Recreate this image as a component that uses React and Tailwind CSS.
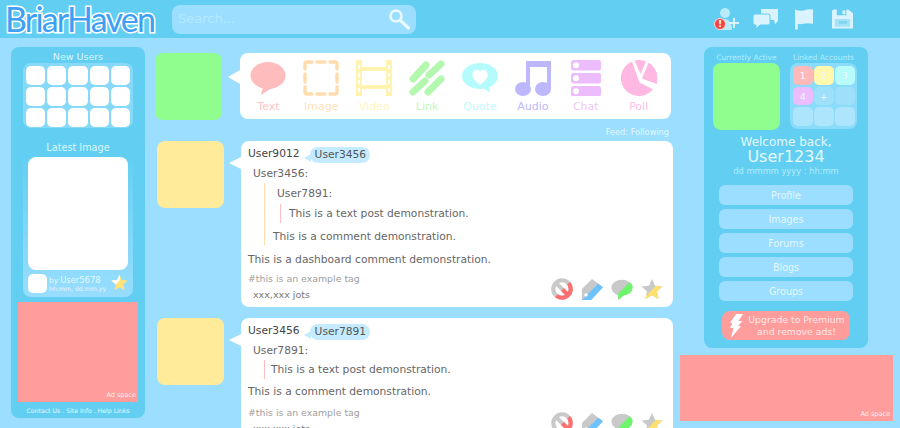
import React from "react";

const newUsers = Array.from({ length: 15 });

const composerItems = [
  { label: "Text", color: "text-[#ffc4c4]", icon: <TextIcon /> },
  { label: "Image", color: "text-[#ffe2bd]", icon: <ImageIcon /> },
  { label: "Video", color: "text-[#fff5bd]", icon: <VideoIcon /> },
  { label: "Link", color: "text-[#c0f9bb]", icon: <LinkIcon /> },
  { label: "Quote", color: "text-[#c0fbfb]", icon: <QuoteIcon /> },
  { label: "Audio", color: "text-[#bdb8fb]", icon: <AudioIcon /> },
  { label: "Chat", color: "text-[#efc8fd]", icon: <ChatIcon /> },
  { label: "Poll", color: "text-[#ffc0e6]", icon: <PollIcon /> },
];

const menuItems = ["Profile", "Images", "Forums", "Blogs", "Groups"];

function TextIcon() {
  return (
    <svg viewBox="0 0 36 36" className="w-9 h-9" fill="#ffbcbc">
      <ellipse cx="18" cy="15.5" rx="17.5" ry="13.5" />
      <path d="M13 27 L11 35 L22 28 Z" />
    </svg>
  );
}

function ImageIcon() {
  return (
    <svg viewBox="0 0 36 36" className="w-9 h-9" fill="none" stroke="#ffdcae" strokeWidth="3.4" strokeLinecap="round">
      <path d="M2 9 V4 Q2 2 4 2 H9" />
      <path d="M14 2 H22" />
      <path d="M27 2 H32 Q34 2 34 4 V9" />
      <path d="M34 14 V22" />
      <path d="M34 27 V32 Q34 34 32 34 H27" />
      <path d="M22 34 H14" />
      <path d="M9 34 H4 Q2 34 2 32 V27" />
      <path d="M2 22 V14" />
    </svg>
  );
}

function VideoIcon() {
  return (
    <svg viewBox="0 0 36 36" className="w-9 h-9">
      <path
        fill="#fff3ad"
        fillRule="evenodd"
        d="M0 0 H6 V7 H30 V0 H36 V36 H30 V29 H6 V36 H0 Z M6 11 V25 H30 V11 Z M2 5 V9 H4 V5 Z M2 13 V17 H4 V13 Z M2 20 V24 H4 V20 Z M2 28 V32 H4 V28 Z M32 5 V9 H34 V5 Z M32 13 V17 H34 V13 Z M32 20 V24 H34 V20 Z M32 28 V32 H34 V28 Z"
      />
    </svg>
  );
}

function LinkIcon() {
  return (
    <svg viewBox="0 0 36 36" className="w-9 h-9" fill="none" stroke="#b4f7ae" strokeWidth="7" strokeLinecap="round">
      <path d="M4 19 L17 5" />
      <path d="M20 15 L32 4" />
      <path d="M4 32 L16 21" />
      <path d="M19 32 L32 19" />
    </svg>
  );
}

function QuoteIcon() {
  return (
    <svg viewBox="0 0 36 36" className="w-9 h-9">
      <ellipse cx="18" cy="16" rx="18" ry="13" fill="#b6fbfb" />
      <path d="M20 27 L28 33 L27 25 Z" fill="#b6fbfb" />
      <path d="M18 25 C11 19 9 16 11 12 C13 9 17 9 18 12 C19 9 23 9 25 12 C27 16 25 19 18 25 Z" fill="#fff" />
    </svg>
  );
}

function AudioIcon() {
  return (
    <svg viewBox="0 0 36 36" className="w-9 h-9" fill="#bdb8fb">
      <path d="M11 1 H36 V28 H32 V7 H15 V28 H11 Z" />
      <ellipse cx="8" cy="29" rx="8" ry="7" />
      <ellipse cx="28" cy="29" rx="8" ry="7" />
    </svg>
  );
}

function ChatIcon() {
  return (
    <svg viewBox="0 0 30 36" className="w-[30px] h-9">
      {[0, 13, 26].map((y) => (
        <g key={y}>
          <rect x="0" y={y} width="30" height="10.5" rx="2.5" fill="#ecbcfd" />
          <circle cx="5" cy={y + 5.2} r="3" fill="#fff" />
        </g>
      ))}
    </svg>
  );
}

function PollIcon() {
  return (
    <svg viewBox="0 0 36 36" className="w-9 h-9" fill="#ffb8e2">
      <path d="M11 1.4 L18.5 22.5 L32 29.2 A18 18 0 1 1 11 1.4 Z" />
      <path d="M13.5 0.6 A18 18 0 0 1 25 1.4 L19.5 14 Z" />
      <path d="M27.5 2.7 A18 18 0 0 1 35.6 24 L21 18.5 Z" />
    </svg>
  );
}

// grey on the top left, colour on the bottom right
function SplitIcon({ color, children }) {
  return (
    <svg viewBox="0 0 24 24" className="w-[22px] h-[22px]">
      <defs>
        <clipPath id="split-corner">
          <path d="M24 1 L24 24 L1 24 Z" />
        </clipPath>
      </defs>
      <g fill="#c9c9c9" stroke="#c9c9c9">{children}</g>
      <g clipPath="url(#split-corner)" fill={color} stroke={color}>{children}</g>
    </svg>
  );
}

function PostActions() {
  return (
    <div className="flex items-center gap-2 mb-[2px] mr-[2px]">
      <SplitIcon color="#ff6f6f">
        <circle cx="12" cy="12" r="9.5" fill="none" strokeWidth="4.5" />
        <path d="M6 6 L18 18" strokeWidth="4.5" fill="none" />
      </SplitIcon>
      <SplitIcon color="#6cc3ff">
        <path
          fillRule="evenodd"
          stroke="none"
          d="M12 1 L24 10 L11 24 L1 24 L1 12 Z M5.5 16.5 A2 2 0 1 0 5.5 20.5 A2 2 0 1 0 5.5 16.5 Z"
        />
      </SplitIcon>
      <SplitIcon color="#6df56d">
        <ellipse cx="12" cy="10.5" rx="11.5" ry="8.5" stroke="none" />
        <path d="M8 18 L8 24 L15 18 Z" stroke="none" />
      </SplitIcon>
      <SplitIcon color="#ffdf6e">
        <path stroke="none" d="M12 1 L15.4 8.5 L23.5 9.3 L17.4 14.8 L19.2 23 L12 18.7 L4.8 23 L6.6 14.8 L0.5 9.3 L8.6 8.5 Z" />
      </SplitIcon>
    </div>
  );
}

function Post({ author, reblogged, children, tagOffset }) {
  return (
    <div className="flex ml-[2px]">
      <div className="w-[67px] h-[67px] rounded-lg bg-[#ffeb99] shrink-0" />
      <div className="relative ml-[17px] w-[432px] rounded-lg bg-white pl-[7px] pr-[8px] pt-[5px] pb-[5px] text-[10.7px] text-[#666]">
        <div className="absolute -left-[12px] top-[16px] w-0 h-0 border-y-[6px] border-y-transparent border-r-[12px] border-r-white" />
        <div className="flex items-center h-[17px] text-[#444]">
          <span>{author}</span>
          <span className="relative ml-[10px] rounded-full bg-[#c4ebff] pl-[5px] pr-[4px] h-[16px] leading-[16px] text-[#555]">
            <span className="absolute -left-[6px] top-[7px] w-0 h-0 border-y-[4px] border-y-transparent border-r-[7px] border-r-[#c4ebff]" />
            {reblogged}
          </span>
        </div>
        {children}
        <div className="flex items-end justify-between">
          <div className={tagOffset}>
            <div className="text-[9.4px] leading-[14px] text-[#a0a0a0]">#this is an example tag</div>
            <div className="ml-[5px] mt-[2px] text-[9.5px] leading-[14px] text-[#777]">xxx,xxx jots</div>
          </div>
          <PostActions />
        </div>
      </div>
    </div>
  );
}

export default function App() {
  return (
    <div className="w-[900px] h-[428px] overflow-hidden bg-[#9bdeff] font-['DejaVu_Sans',sans-serif]">
      {/* Top bar */}
      <header className="h-[38px] bg-[#62cff2] flex items-center pl-[5px]">
        <div className="w-[155px] h-[38px] whitespace-nowrap text-[34px] leading-[37px] tracking-[-1.8px] font-['Lato',sans-serif] font-normal text-[#3d9ff5] [-webkit-text-stroke:3px_white] [paint-order:stroke_fill]">
          BriarHaven
        </div>
        <div className="ml-[12px] w-[244px] h-[29px] rounded-lg bg-[#9bdeff] flex items-center justify-between pl-[6px] pr-[6px]">
          <span className="text-[13px] text-[#b6e9ff]">Search...</span>
          <svg viewBox="0 0 22 22" className="w-[22px] h-[22px]" fill="none" stroke="#e9f9ff">
            <circle cx="8" cy="8" r="5.5" strokeWidth="2.5" />
            <path d="M12.5 12.5 L20.5 20" strokeWidth="3.2" strokeLinecap="round" />
          </svg>
        </div>
        <div className="ml-auto mr-[47px] flex items-center text-[#d9f4ff]">
          <div className="relative w-[25px] h-[24px]">
            <svg viewBox="0 0 25 24" className="w-[25px] h-[24px]" fill="#b9ebfb">
              <circle cx="11" cy="6" r="5" />
              <path d="M4 23 Q4 13 11 12 Q18 13 18 23 Z" />
              <path d="M15 16 H25 M20 11 V21" stroke="#d9f4ff" strokeWidth="2" fill="none" />
            </svg>
            <span className="absolute left-0 top-[11px] w-[12px] h-[12px] rounded-full bg-[#f34545] border border-[#ffd5d5] text-white text-[9px] leading-[10px] font-bold text-center">!</span>
          </div>
          <svg viewBox="0 0 26 22" className="ml-[14px] w-[26px] h-[22px]" fill="#d9f4ff">
            <path d="M8 1 H25 V13 L22 16 L21 12 H8 Z" />
            <path d="M2 6 H15 Q17 6 17 8 V15 Q17 17 15 17 H7 L3 21 V17 H2 Q0 17 0 15 V8 Q0 6 2 6 Z" stroke="#62cff2" strokeWidth="1" />
          </svg>
          <svg viewBox="0 0 19 22" className="ml-[16px] w-[18px] h-[22px]" fill="#d9f4ff">
            <path d="M0 1 Q5 3 9 2 Q14 0 19 1 V16 Q14 15 9 16 Q5 17 3 16 V22 H0 Z" />
          </svg>
          <svg viewBox="0 0 22 22" className="ml-[19px] w-[21px] h-[22px]">
            <rect x="2" y="9" width="18" height="11" fill="#a4e4f8" />
            <path fill="#d9f4ff" fillRule="evenodd" d="M2 1 H5 V7 H15 V1 H17 L22 5 V21 H0 V3 Q0 1 2 1 Z M3 11 V19 H19 V11 Z M11 2 V6 H14 V2 Z" />
            <rect x="7" y="13" width="9" height="3" fill="#7fd5ee" />
          </svg>
        </div>
      </header>

      <div className="flex items-start">
        {/* Left column */}
        <aside className="ml-[11px] mt-[9px] w-[134px] h-[371px] shrink-0 rounded-lg bg-[#62cff2] flex flex-col items-center text-[#d9f4ff]">
          <div className="mt-[4px] h-[12px] leading-[12px] text-[9.5px]">New Users</div>
          <div className="mt-0 w-[110px] h-[65px] rounded-lg bg-[#86d9f9] grid grid-cols-5 gap-[2px] p-[3px]">
            {newUsers.map((_, i) => (
              <div key={i} className="w-[19.2px] h-[19px] rounded-[5px] bg-white" />
            ))}
          </div>
          <div className="mt-[13px] h-[13px] leading-[13px] text-[9.7px]">Latest Image</div>
          <div className="mt-[2px] w-[110px] h-[141px] rounded-lg bg-gradient-to-b from-[#62cff2] to-[#98ddfd] px-[5px] pt-[1px]">
            <div className="w-[100px] h-[113px] rounded-lg bg-white" />
            <div className="flex items-start mt-[4px]">
              <div className="w-[19px] h-[19px] rounded-[5px] bg-white shrink-0" />
              <div className="ml-[2px] w-[60px] text-[#e4f8ff]">
                <div className="flex items-baseline h-[10px] leading-[10px] mt-[1px] whitespace-nowrap">
                  <span className="text-[7.5px]">by</span>
                  <span className="ml-[2px] text-[8.4px]">User5678</span>
                </div>
                <div className="text-[6.2px] leading-[7px] whitespace-nowrap">hh:mm, dd.mm.yy</div>
              </div>
              <div className="ml-auto">
                <svg viewBox="0 0 24 24" className="w-[17px] h-[17px]">
                  <path fill="#ffe27a" d="M12 1 L15.4 8.5 L23.5 9.3 L17.4 14.8 L19.2 23 L12 18.7 L4.8 23 L6.6 14.8 L0.5 9.3 L8.6 8.5 Z" />
                  <path fill="#fff" d="M12 1 L8.6 8.5 L0.5 9.3 L6.6 14.8 L13 8 Z" />
                </svg>
              </div>
            </div>
          </div>
          <div className="mt-[5px] w-[120px] h-[100px] bg-[#ff9c9c] flex items-end justify-end pr-[2px] pb-[1px] text-[6.5px] text-[#fff0f0]">
            Ad space
          </div>
          <div className="mt-[5px] text-[6.2px] leading-[8px] font-medium text-[#e4f8ff] whitespace-nowrap">Contact Us . Site Info . Help Links</div>
        </aside>

        {/* Middle column */}
        <main className="ml-[10px] mt-[15px] w-[519px] shrink-0">
          <div className="flex">
            <div className="w-[67px] h-[67px] rounded-lg bg-[#8ffe8f] shrink-0" />
            <div className="relative ml-[18px] w-[431px] h-[66px] rounded-lg bg-white flex pl-[2px] pt-[7px]">
              <div className="absolute -left-[12px] top-[17px] w-0 h-0 border-y-[7px] border-y-transparent border-r-[12px] border-r-white" />
              {composerItems.map((item) => (
                <div key={item.label} className="w-[52.9px] flex flex-col items-center">
                  {item.icon}
                  <span className={`mt-[4px] text-[11px] leading-[14px] ${item.color}`}>{item.label}</span>
                </div>
              ))}
            </div>
          </div>
          <div className="mt-[6px] h-[12px] pr-[5px] text-right text-[8.2px] leading-[12px] text-[#e4f8ff]">Feed: Following</div>
          <div className="mt-[3px] flex flex-col gap-[11px]">
            <Post author="User9012" reblogged="User3456" tagOffset="mt-[5px]">
              <div className="ml-[5px] mt-[4px] leading-[14px]">User3456:</div>
              <div className="ml-[16px] mt-[2px] border-l border-[#ffdcae] pl-[8px]">
                <div className="ml-[4px] pt-[4px] leading-[14px]">User7891:</div>
                <div className="ml-[7px] mt-[3px] border-l border-[#ffbcbc] pl-[8px] h-[19px] leading-[19px]">This is a text post demonstration.</div>
                <div className="mt-[6px] leading-[16px]">This is a comment demonstration.</div>
              </div>
              <div className="mt-[8px] leading-[14px]">This is a dashboard comment demonstration.</div>
            </Post>
            <Post author="User3456" reblogged="User7891" tagOffset="mt-[7px]">
              <div className="ml-[5px] mt-[4px] leading-[14px]">User7891:</div>
              <div className="ml-[16px] mt-[2px] border-l border-[#ffbcbc] pl-[6px] h-[19px] leading-[19px]">This is a text post demonstration.</div>
              <div className="mt-[6px] leading-[14px]">This is a comment demonstration.</div>
            </Post>
          </div>
        </main>

        {/* Right column */}
        <aside className="ml-[6px] mt-[9px] w-[213px] shrink-0 flex flex-col items-start">
          <div className="ml-[24px] w-[164px] h-[301px] rounded-lg bg-[#62cff2] flex flex-col items-center text-[#d9f4ff]">
            <div className="w-full flex pl-[9px] pt-[5px]">
              <div className="w-[67px]">
                <div className="text-[7.5px] leading-[11px] text-center whitespace-nowrap text-[#b5ecff]">Currently Active</div>
                <div className="w-[67px] h-[67px] rounded-lg bg-[#8ffe8f]" />
              </div>
              <div className="ml-[10px] w-[67px]">
                <div className="text-[7.5px] leading-[11px] text-center whitespace-nowrap text-[#b5ecff]">Linked Accounts</div>
                <div className="w-[67px] h-[66px] rounded-lg bg-[#8bdcfa] grid grid-cols-3 gap-[2px] p-[3px]">
                  <Slot color="bg-[#ffb9b9]">1</Slot>
                  <Slot color="bg-[#fff8ad]">2</Slot>
                  <Slot color="bg-[#b7fbfb]">3</Slot>
                  <Slot color="bg-[#ecbcfd]">4</Slot>
                  <Slot color="bg-[#9ee0f9]">+</Slot>
                  <Slot color="bg-[#9ee0f9]" />
                  <Slot color="bg-[#ace5fc]" />
                  <Slot color="bg-[#ace5fc]" />
                  <Slot color="bg-[#ace5fc]" />
                </div>
              </div>
            </div>
            <div className="mt-[5px] text-[12px] leading-[14px] text-[#e4f8ff]">Welcome back,</div>
            <div className="text-[16px] leading-[15px] text-[#e4f8ff]">User1234</div>
            <div className="mt-[1px] text-[8.3px] leading-[12px] text-[#b5ecff]">dd mmmm yyyy : hh:mm</div>
            <div className="mt-[8px] flex flex-col gap-[4px]">
              {menuItems.map((item) => (
                <div key={item} className="w-[134px] h-[20px] rounded-md bg-[#9bdeff] text-center text-[9.6px] leading-[21px] text-[#e4f8ff]">
                  {item}
                </div>
              ))}
            </div>
            <div className="mt-[10px] w-[128px] h-[29px] rounded-lg bg-[#ff9c9c] flex items-center pl-[7px] text-[#ffe9e9]">
              <svg viewBox="0 0 14 24" className="w-[14px] h-[24px] shrink-0">
                <path fill="#fff" d="M7 0 H14 L9.5 7 H13.5 L9 12 H12 L2 24 L4.5 14 H1 L3.5 9 H1 Z" />
              </svg>
              <div className="flex-1 text-center text-[9.3px] leading-[11.5px] whitespace-nowrap">
                Upgrade to Premium
                <br />
                and remove ads!
              </div>
            </div>
          </div>
          <div className="mt-[7px] w-[213px] h-[66px] bg-[#ff9c9c] flex items-end justify-end pr-[3px] pb-[1px] text-[6.5px] text-[#fff0f0]">
            Ad space
          </div>
        </aside>
      </div>
    </div>
  );
}

function Slot({ color, children }) {
  return (
    <div className={`w-[19.5px] h-[18.7px] rounded-[5px] ${color} text-center text-[9.5px] leading-[19px] text-[#eafaff]`}>
      {children}
    </div>
  );
}
